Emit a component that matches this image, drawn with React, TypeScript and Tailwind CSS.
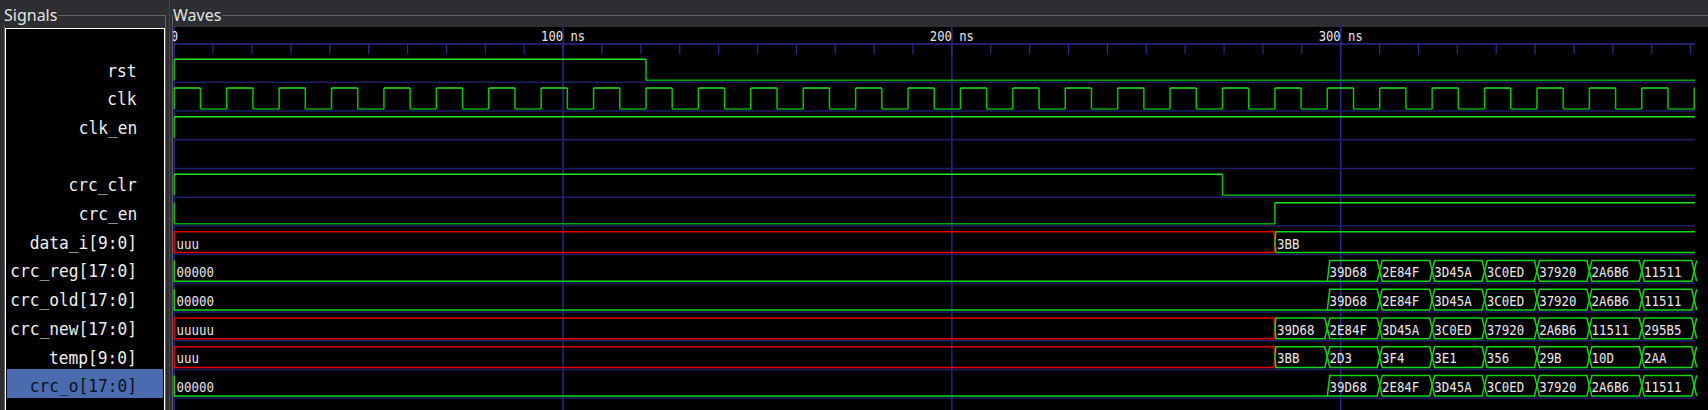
import React from 'react';

const T0 = 1.3;
const NS = 3.888;
const P = 52.41;
const END = 1522;
const ROW = 28.71;
const B0 = 55.3;
const edge = (k: number) => T0 + P * k;
const bot = (i: number) => B0 + ROW * i;

const C = {
  hi: '#22e822',
  lo: '#00a800',
  tr: '#00c800',
  bus: '#10d810',
  x: '#e80000',
  grid: '#28288a',
  sep: '#1e1e6c',
  ruler: '#2a2a8e',
  text: '#e8e8e8',
};

const MONO = 'DejaVu Sans Mono, monospace';

function Bit({ row, start, changes }: { row: number; start: 0 | 1; changes: number[] }) {
  const b = bot(row);
  const hy = b - 23;
  const ly = b - 2;
  const els: React.ReactNode[] = [];
  els.push(<line key="s" x1={T0} y1={hy} x2={T0} y2={ly} stroke={C.tr} strokeWidth={1.5} />);
  let lvl = start;
  let x = T0;
  const pts = [...changes, END];
  pts.forEach((cx, idx) => {
    const y = lvl ? hy : ly;
    els.push(<line key={'h' + idx} x1={x} y1={y} x2={cx} y2={y} stroke={lvl ? C.hi : C.lo} strokeWidth={1.5} />);
    if (idx < changes.length) {
      els.push(<line key={'v' + idx} x1={cx} y1={hy} x2={cx} y2={ly} stroke={C.tr} strokeWidth={1.5} />);
      lvl = lvl ? 0 : 1;
    }
    x = cx;
  });
  return <g>{els}</g>;
}

type Seg = { x0: number; x1: number; v: string; k: 'x' | 'v' | 'z'; open?: boolean };

function Label({ x, y, v }: { x: number; y: number; v: string }) {
  return (
    <text
      x={x}
      y={y}
      fontSize={14.5}
      fontFamily={MONO}
      fill={C.text}
      textLength={v.length * 7.48}
      lengthAdjust="spacingAndGlyphs"
    >
      {v}
    </text>
  );
}

function Bus({ row, segs, tail }: { row: number; segs: Seg[]; tail?: number }) {
  const b = bot(row);
  const ty = b - 22.7;
  const ly = b - 2;
  const my = (ty + ly) / 2;
  const els: React.ReactNode[] = [];
  segs.forEach((s, i) => {
    const prev = segs[i - 1];
    const next = segs[i + 1];
    const col = s.k === 'x' ? C.x : C.bus;
    const dS = !prev ? 0 : prev.k === 'x' || s.k === 'x' ? 1 : 2.5;
    const dE = !next ? 2.5 : next.k === 'x' || s.k === 'x' ? 1 : 2.5;
    if (s.k === 'z') {
      els.push(
        <polyline key={'z' + i} points={`${s.x0},${ty} ${s.x0},${ly} ${s.x1},${ly}`} fill="none" stroke={col} strokeWidth={1.5} />
      );
    } else if (s.open) {
      els.push(
        <polyline
          key={'o' + i}
          points={`${END},${ty} ${s.x0 + dS},${ty} ${s.x0},${my} ${s.x0 + dS},${ly} ${END},${ly}`}
          fill="none"
          stroke={col}
          strokeWidth={1.5}
        />
      );
    } else if (prev && prev.k === 'z') {
      els.push(
        <polygon
          key={'p' + i}
          points={`${s.x0},${ly} ${s.x0 + 2.5},${ty} ${s.x1 - dE},${ty} ${s.x1},${my} ${s.x1 - dE},${ly}`}
          fill="none"
          stroke={col}
          strokeWidth={1.5}
        />
      );
    } else {
      els.push(
        <polygon
          key={'p' + i}
          points={`${s.x0},${my} ${s.x0 + dS},${ty} ${s.x1 - dE},${ty} ${s.x1},${my} ${s.x1 - dE},${ly} ${s.x0 + dS},${ly}`}
          fill="none"
          stroke={col}
          strokeWidth={1.5}
        />
      );
    }
    if (s.v) els.push(<Label key={'t' + i} x={s.x0 + 2.2} y={b - 6} v={s.v} />);
  });
  if (tail !== undefined) {
    els.push(
      <polyline
        key="tail"
        points={`${tail + 2.5},${ty} ${tail},${my} ${tail + 2.5},${ly}`}
        fill="none"
        stroke={C.bus}
        strokeWidth={1.5}
      />
    );
  }
  return <g>{els}</g>;
}

const crcVals = ['39D68', '2E84F', '3D45A', '3C0ED', '37920', '2A6B6', '11511'];

function valueSegs(startK: number, vals: string[]): Seg[] {
  return vals.map((v, i) => ({ x0: edge(startK + i), x1: edge(startK + i + 1), v, k: 'v' as const }));
}

const crcRegSegs: Seg[] = [{ x0: T0, x1: edge(22), v: '00000', k: 'z' }, ...valueSegs(22, crcVals)];
const crcNewSegs: Seg[] = [{ x0: T0, x1: edge(21), v: 'uuuuu', k: 'x' }, ...valueSegs(21, [...crcVals, '295B5'])];
const tempSegs: Seg[] = [
  { x0: T0, x1: edge(21), v: 'uuu', k: 'x' },
  ...valueSegs(21, ['3BB', '2D3', '3F4', '3E1', '356', '29B', '10D', '2AA']),
];
const dataSegs: Seg[] = [
  { x0: T0, x1: edge(21), v: 'uuu', k: 'x' },
  { x0: edge(21), x1: END, v: '3BB', k: 'v', open: true },
];

const clkChanges = Array.from({ length: 58 }, (_, i) => T0 + (P / 2) * (i + 1));

function Waves() {
  const W = 1535;
  const H = 383;
  const ticks = Array.from({ length: 40 }, (_, i) => T0 + NS * 10 * i);
  const majors = [0, 1, 2, 3].map((k) => T0 + NS * 100 * k);
  const labels = ['0', '100 ns', '200 ns', '300 ns'];
  return (
    <svg width={W} height={H} viewBox={`0 0 ${W} ${H}`} className="block">
      {majors.map((x, i) => (
        <line key={'g' + i} x1={x} y1={0} x2={x} y2={H} stroke={C.grid} strokeWidth={1.5} />
      ))}
      <line x1={T0} y1={17} x2={END} y2={17} stroke={C.ruler} strokeWidth={1.5} />
      {ticks.map((x, i) => (
        <line key={'t' + i} x1={x} y1={17} x2={x} y2={27} stroke={C.ruler} strokeWidth={1.2} />
      ))}
      {labels.map((l, i) => {
        const w = l.length * 7.35;
        return (
          <text
            key={'l' + i}
            x={majors[i] - w / 2}
            y={14}
            fontSize={14}
            fontFamily={MONO}
            fill={C.text}
            textLength={w}
            lengthAdjust="spacingAndGlyphs"
          >
            {l}
          </text>
        );
      })}
      {Array.from({ length: 12 }, (_, i) => (
        <line key={'s' + i} x1={T0} y1={bot(i)} x2={END} y2={bot(i)} stroke={C.sep} strokeWidth={1.5} />
      ))}
      <Bit row={0} start={1} changes={[edge(9)]} />
      <Bit row={1} start={1} changes={clkChanges} />
      <Bit row={2} start={1} changes={[]} />
      <Bit row={4} start={1} changes={[edge(20)]} />
      <Bit row={5} start={0} changes={[edge(21)]} />
      <Bus row={6} segs={dataSegs} />
      <Bus row={7} segs={crcRegSegs} tail={edge(29)} />
      <Bus row={8} segs={crcRegSegs} tail={edge(29)} />
      <Bus row={9} segs={crcNewSegs} tail={edge(29)} />
      <Bus row={10} segs={tempSegs} tail={edge(29)} />
      <Bus row={11} segs={crcRegSegs} tail={edge(29)} />
    </svg>
  );
}

const names = [
  'rst',
  'clk',
  'clk_en',
  '',
  'crc_clr',
  'crc_en',
  'data_i[9:0]',
  'crc_reg[17:0]',
  'crc_old[17:0]',
  'crc_new[17:0]',
  'temp[9:0]',
  'crc_o[17:0]',
];

export default function App() {
  return (
    <div className="w-[1708px] h-[410px] bg-[#2c2e32] flex overflow-hidden">
      <div className="relative w-[166px] h-full pt-[15px] pl-[4px] shrink-0">
        <div className="h-full border-t border-l border-r border-[#606266] pt-[12px]">
          <div className="h-full bg-black border-t border-l border-r border-white pt-[24.6px]">
            {names.map((n, i) => {
              const sel = i === names.length - 1;
              return (
                <div
                  key={i}
                  className={
                    sel
                      ? 'flex items-end justify-end h-[28.71px] mx-[1px] pr-[26px] pb-[2.3px] bg-[#4a6cae] text-[#0b1120]'
                      : 'flex items-end justify-end h-[28.71px] mx-[1px] pr-[26px] pb-[2.3px] text-[#f0f0f0]'
                  }
                >
                  <span className="[font-family:'DejaVu_Sans_Mono',monospace] text-[17.5px] leading-none whitespace-pre scale-x-[0.925] origin-right">
                    {n}
                  </span>
                </div>
              );
            })}
          </div>
        </div>
        <span className="absolute left-[4px] top-[5px] pr-[1px] bg-[#2c2e32] text-[16px] leading-[20px] text-[#e2e2e2] [font-family:'Noto_Sans',sans-serif]">
          Signals
        </span>
      </div>
      <div className="w-[6px] h-full shrink-0 flex justify-center">
        <div className="w-px h-full bg-[#45474b]" />
      </div>
      <div className="relative flex-1 h-full pt-[15px]">
        <div className="h-full border-t border-l border-[#606266] pt-[11px]">
          <div className="h-full bg-black overflow-hidden">
            <Waves />
          </div>
        </div>
        <span className="absolute left-[1px] top-[5px] pr-[1px] bg-[#2c2e32] text-[16px] leading-[20px] text-[#e2e2e2] [font-family:'Noto_Sans',sans-serif]">
          Waves
        </span>
      </div>
    </div>
  );
}
